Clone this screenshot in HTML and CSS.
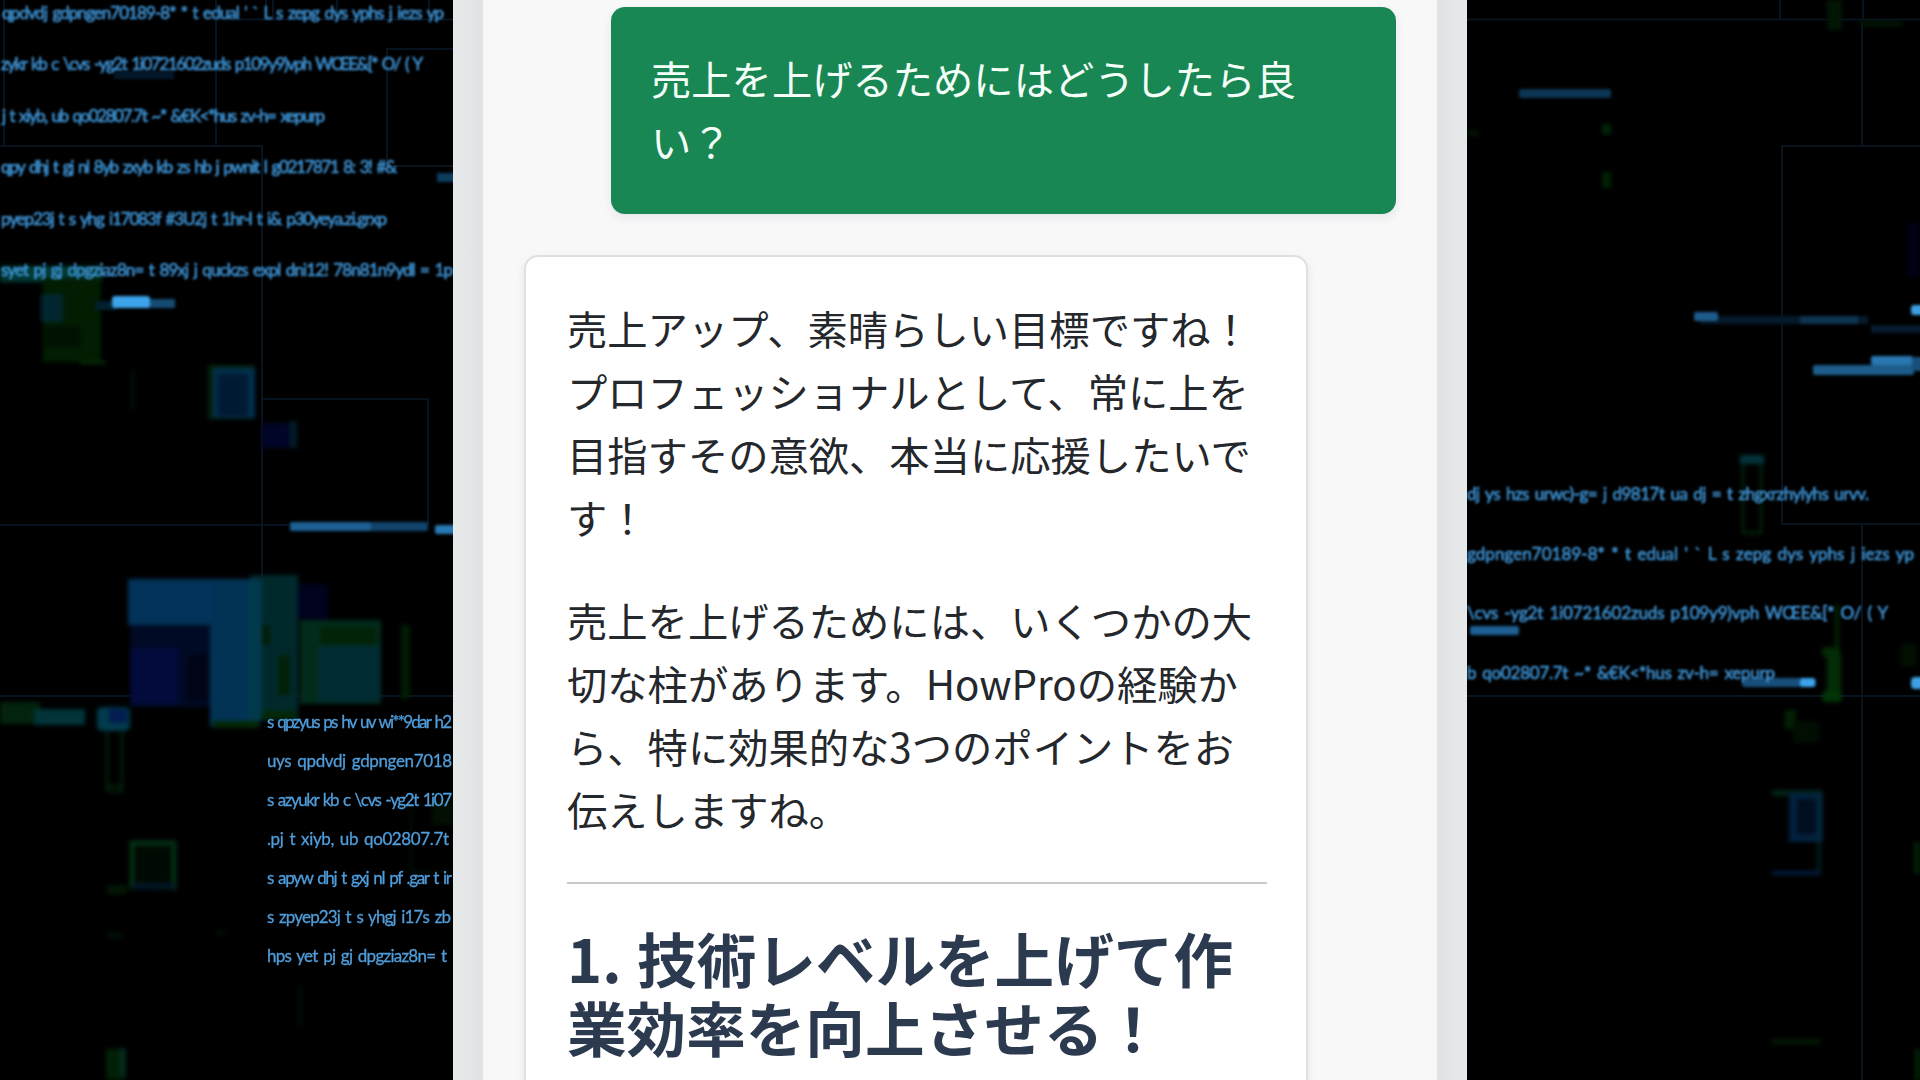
FILE: index.html
```
<!DOCTYPE html>
<html lang="ja">

<head>
    <meta charset="UTF-8">
    <meta name="viewport" content="width=device-width, initial-scale=1.0">
    <title>HowPro Chat</title>
    <link rel="stylesheet" href="styles.css">
</head>

<body>
    <svg class="backdrop" viewBox="0 0 1920 1080" aria-hidden="true">
        <!-- thin grid lines -->
        <g class="grid-lines">
            <path d="M4 0V146M216 0V146M0 146H262V697M262 399H428V525M0 525H289M0 696H453M387 166V49H453M387 166H453M238 19.500H453M266 0V19M273 0V19M337 0V19M429 0V19" />
            <path d="M1467 19.500H1920M1780 0V19M1863 0V19M1920 146H1782V524H1920M1862 19V146M1862 525V1080M1467 696H1920" />
        </g>

        <!-- blocks -->
        <g class="blocks">
            <rect x="0" y="266" width="102" height="16" fill="#023a35" />
            <rect x="43" y="278" width="58" height="84" fill="#021d02" />
            <rect x="41" y="294" width="22" height="28" fill="#012630" />
            <rect x="45" y="326" width="36" height="22" fill="#021202" />
            <rect x="80" y="361" width="26" height="3" fill="#032c03" />
            <rect x="208" y="365" width="47" height="54" fill="#03220e" />
            <rect x="213" y="368" width="42" height="50" fill="#022f4c" />
            <rect x="218" y="374" width="30" height="42" fill="#011a33" />
            <rect x="262" y="423" width="35" height="25" fill="#010527" />
            <rect x="290" y="421" width="7" height="27" fill="#011c26" />
            <rect x="132" y="372" width="2" height="38" fill="#012010" />
            <rect x="130" y="622" width="82" height="85" fill="#010a24" />
            <rect x="131" y="648" width="48" height="56" fill="#020b3b" />
            <rect x="188" y="655" width="20" height="45" fill="#010414" />
            <rect x="295" y="584" width="33" height="35" fill="#01021e" />
            <rect x="300" y="620" width="81" height="84" fill="#022b1b" />
            <rect x="318" y="646" width="62" height="56" fill="#022c33" />
            <rect x="320" y="627" width="56" height="17" fill="#022307" />
            <rect x="250" y="575" width="48" height="145" fill="#01292c" />
            <rect x="210" y="579" width="49" height="148" fill="#023355" />
            <rect x="248" y="580" width="14" height="141" fill="#02394c" />
            <rect x="262" y="625" width="8" height="20" fill="#021e07" />
            <rect x="278" y="655" width="12" height="40" fill="#022109" />
            <rect x="128" y="579" width="86" height="46" fill="#023358" />
            <rect x="213" y="721" width="45" height="7" fill="#032806" />
            <rect x="262" y="711" width="34" height="8" fill="#032806" />
            <rect x="0" y="702" width="40" height="22" fill="#03230c" />
            <rect x="34" y="709" width="51" height="16" fill="#02343a" />
            <rect x="97" y="707" width="33" height="24" rx="5" fill="#023b4c" />
            <rect x="109" y="709" width="18" height="14" fill="#031d50" />
            <rect x="401" y="625" width="9" height="74" fill="#021c04" />
            <path d="M107 732V791H122V732M107 786H122" stroke="#032d0d" stroke-width="2" fill="none" />
            <path d="M132 889V843H174V890" stroke="#033013" stroke-width="5" fill="#010a02" />
            <path d="M132 886H174" stroke="#011727" stroke-width="6" />
            <rect x="107" y="885" width="20" height="9" fill="#021704" />
            <rect x="107" y="932" width="15" height="7" fill="#010e03" />
            <rect x="216" y="930" width="9" height="5" fill="#010f03" />
            <rect x="106" y="1049" width="20" height="31" fill="#022005" />
            <rect x="120" y="1048" width="5" height="28" fill="#022d26" />
            <rect x="299" y="986" width="2" height="40" fill="#01170c" />
            <path d="M411 805V872H453" stroke="#021407" stroke-width="2" fill="none" />
            <rect x="432" y="800" width="21" height="25" fill="#020f02" />

            <rect x="1827" y="0" width="15" height="30" fill="#021604" />
            <rect x="1860" y="21" width="42" height="5" fill="#021804" />
            <rect x="1602" y="124" width="9" height="10" fill="#022509" />
            <rect x="1602" y="172" width="9" height="16" fill="#022004" />
            <rect x="1467" y="131" width="12" height="4" fill="#021a02" />
            <rect x="1907" y="223" width="12" height="54" fill="#010116" />
            <rect x="1740" y="455" width="24" height="9" fill="#023339" />
            <path d="M1743 464V533H1761V464" stroke="#02230b" stroke-width="3" fill="none" />
            <rect x="1835" y="604" width="4" height="50" fill="#022504" />
            <rect x="1822" y="647" width="18" height="10" rx="4" fill="#032b06" />
            <rect x="1827" y="654" width="14" height="42" fill="#032d06" />
            <rect x="1822" y="691" width="20" height="11" rx="4" fill="#033407" />
            <rect x="1901" y="644" width="15" height="22" fill="#021002" />
            <rect x="1785" y="710" width="11" height="19" fill="#022104" />
            <rect x="1793" y="721" width="26" height="22" fill="#010e02" />
            <rect x="1772" y="790" width="50" height="6" fill="#022419" />
            <rect x="1789" y="793" width="34" height="49" fill="#02213e" />
            <rect x="1797" y="799" width="19" height="35" fill="#010e20" />
            <rect x="1817" y="794" width="4" height="80" fill="#022d32" opacity=".6" />
            <rect x="1772" y="871" width="48" height="4" fill="#021b40" />
            <rect x="1772" y="1039" width="48" height="5" fill="#021b04" />
            <rect x="1914" y="842" width="6" height="32" fill="#022006" />
            <rect x="1915" y="1049" width="5" height="31" fill="#022506" />
        </g>

        <!-- light streaks -->
        <g class="streaks">
            <rect x="114" y="71" width="60" height="8" fill="#03172b" />
            <rect x="437" y="173" width="20" height="9" fill="#0d3b5d" />
            <rect x="95" y="301" width="22" height="9" fill="#03202f" />
            <rect x="145" y="299" width="30" height="9" fill="#154b73" />
            <rect x="112" y="296" width="38" height="12" rx="3" fill="#3da3eb" />
            <rect x="290" y="522" width="138" height="9" rx="2" fill="#12436a" />
            <rect x="290" y="522" width="81" height="9" rx="2" fill="#1d5f92" />
            <rect x="435" y="525" width="24" height="9" rx="2" fill="#2878b3" />
            <rect x="1519" y="89" width="92" height="9" rx="2" fill="#0b3552" />
            <rect x="1700" y="316" width="168" height="8" fill="#051a2c" />
            <rect x="1800" y="316" width="58" height="8" fill="#0d3450" />
            <rect x="1694" y="312" width="24" height="9" rx="2" fill="#1c5b8a" />
            <rect x="1871" y="325" width="55" height="8" fill="#051a2c" />
            <rect x="1911" y="305" width="15" height="10" rx="3" fill="#3da0e4" />
            <rect x="1813" y="365" width="101" height="10" rx="2" fill="#1d5c8b" />
            <rect x="1871" y="356" width="42" height="9" rx="2" fill="#2877b0" />
            <rect x="1912" y="357" width="14" height="14" fill="#174f7a" />
            <rect x="1470" y="626" width="49" height="9" rx="2" fill="#1d5f92" />
            <rect x="1742" y="678" width="74" height="9" rx="3" fill="#174f7a" />
            <rect x="1800" y="678" width="15" height="9" rx="3" fill="#3da3eb" />
            <rect x="1911" y="677" width="15" height="12" rx="4" fill="#3da0e4" />
        </g>

        <!-- drifting code text -->
        <g class="code code-blur">
            <text x="2" y="19" textLength="442">qpdvdj gdpngen70189-8* * t edual ' ` L s zepg dys yphs j iezs yp</text>
            <text x="1" y="70" textLength="422">zykr kb c \cvs -yg2t 1i0721602zuds p109y9)vph WŒE&amp;[* O/ ( Y</text>
            <text x="2" y="122" textLength="323">j t xiyb, ub qo02807.7t ~* &amp;€K&lt;*hus zv-h= xepurp</text>
            <text x="1" y="173" textLength="396">qpy dhj t gj nl 8yb zxyb kb zs hb j pwnit l g0217871 8: 3! #&amp;</text>
            <text x="1" y="225" textLength="386">pyep23j t s yhg i17083f #3U2j t 1hr-l t i&amp; p30yeya.zi.grxp</text>
            <text x="1" y="276" textLength="452">syet pj gj dpgziaz8n= t 89xj j quckzs expl dni12! 78n81n9ydl = 1p</text>
            <text x="1467" y="500" textLength="402">dj ys hzs urwc)-g= j d9817t ua dj = t zhgxrzhylyhs urvv.</text>
            <text x="1467" y="560" textLength="447">gdpngen70189-8* * t edual ' ` L s zepg dys yphs j iezs yp</text>
            <text x="1467" y="619" textLength="421">\cvs -yg2t 1i0721602zuds p109y9)vph WŒE&amp;[* O/ ( Y</text>
            <text x="1467" y="679" textLength="308">b qo02807.7t ~* &amp;€K&lt;*hus zv-h= xepurp</text>
        </g>
        <g class="code">
            <text x="267" y="728" textLength="185">s qpzyus ps hv uv wi**9dar h2</text>
            <text x="267" y="767" textLength="185">uys qpdvdj gdpngen7018</text>
            <text x="267" y="806" textLength="185">s azyukr kb c \cvs -yg2t 1i07</text>
            <text x="267" y="845" textLength="182">.pj t xiyb, ub qo02807.7t</text>
            <text x="267" y="884" textLength="185">s apyw dhj t gxj nl pf .gar t ir</text>
            <text x="267" y="923" textLength="184">s zpyep23j t s yhgj i17s zb</text>
            <text x="267" y="962" textLength="180">hps yet pj gj dpgziaz8n= t</text>
        </g>
    </svg>

    <div class="phone">
        <main class="chat">
            <div class="message user">売上を上げるためにはどうしたら良い？</div>
            <div class="message bot">
                <p>売上アップ、素晴らしい目標ですね！プロフェッショナルとして、常に上を目指すその意欲、本当に応援したいです！</p>
                <p>売上を上げるためには、いくつかの大切な柱があります。HowProの経験から、特に効果的な3つのポイントをお伝えしますね。</p>
                <hr>
                <h2>1. 技術レベルを上げて作業効率を向上させる！</h2>
            </div>
        </main>
    </div>
</body>

</html>
```

FILE: styles.css
```
* {
    box-sizing: border-box;
}

body {
    margin: 0;
    height: 100vh;
    overflow: hidden;
    background-color: #000;
    font-family: "Noto Sans CJK JP", sans-serif;
    color: #24272b;
}

/* Background artwork behind the phone */
.backdrop {
    position: absolute;
    top: 0;
    left: 0;
    width: 1920px;
    height: 1080px;
}

.grid-lines {
    fill: none;
    stroke: #07131f;
    stroke-width: 2;
}

.blocks {
    filter: blur(2px);
}

.streaks {
    filter: blur(1.5px);
}

.code {
    font-family: Lato, sans-serif;
    font-size: 17px;
    word-spacing: 2px;
    fill: #4f9ddb;
    stroke: #4f9ddb;
    stroke-width: 0.3px;
    filter: blur(0.6px);
}

.code-blur {
    fill: #3b8dcc;
    stroke: #3b8dcc;
    stroke-width: 0.7px;
    filter: blur(1.2px);
}

.phone {
    position: relative;
    width: 1014px;
    height: 1080px;
    margin: 0 auto;
    padding: 0 30px;
    background: linear-gradient(to right, #e6e9ea 0, #e1e2e4 30px, #e1e2e4 984px, #e6e9ea 100%);
}

.chat {
    display: flex;
    flex-direction: column;
    gap: 41px;
    height: 1080px;
    padding: 7px 41px 0;
    background-color: #f8f8f9;
    overflow: hidden;
}

.message {
    flex-shrink: 0;
    width: 784px;
    border-radius: 14px;
    font-size: 40.3px;
    line-height: 63px;
    box-shadow: 0 4px 10px rgba(30, 40, 60, 0.08);
}

.user {
    align-self: flex-end;
    width: 785px;
    height: 207px;
    padding: 39px 40px;
    background-color: #198754;
    color: #f4fff8;
}

.bot {
    height: 900px;
    padding: 39px 39px 0 41px;
    background-color: #fff;
    border: 2px solid #dfe0e5;
}

.bot p {
    margin: 0 0 40px;
}

.bot hr {
    height: 2px;
    margin: 42px 0 39px;
    border: none;
    background-color: #c8c9cb;
}

.bot h2 {
    margin: 0;
    font-size: 59.6px;
    line-height: 68.5px;
    font-weight: 700;
    word-spacing: 2px;
    color: #2c3a4f;
}
```
